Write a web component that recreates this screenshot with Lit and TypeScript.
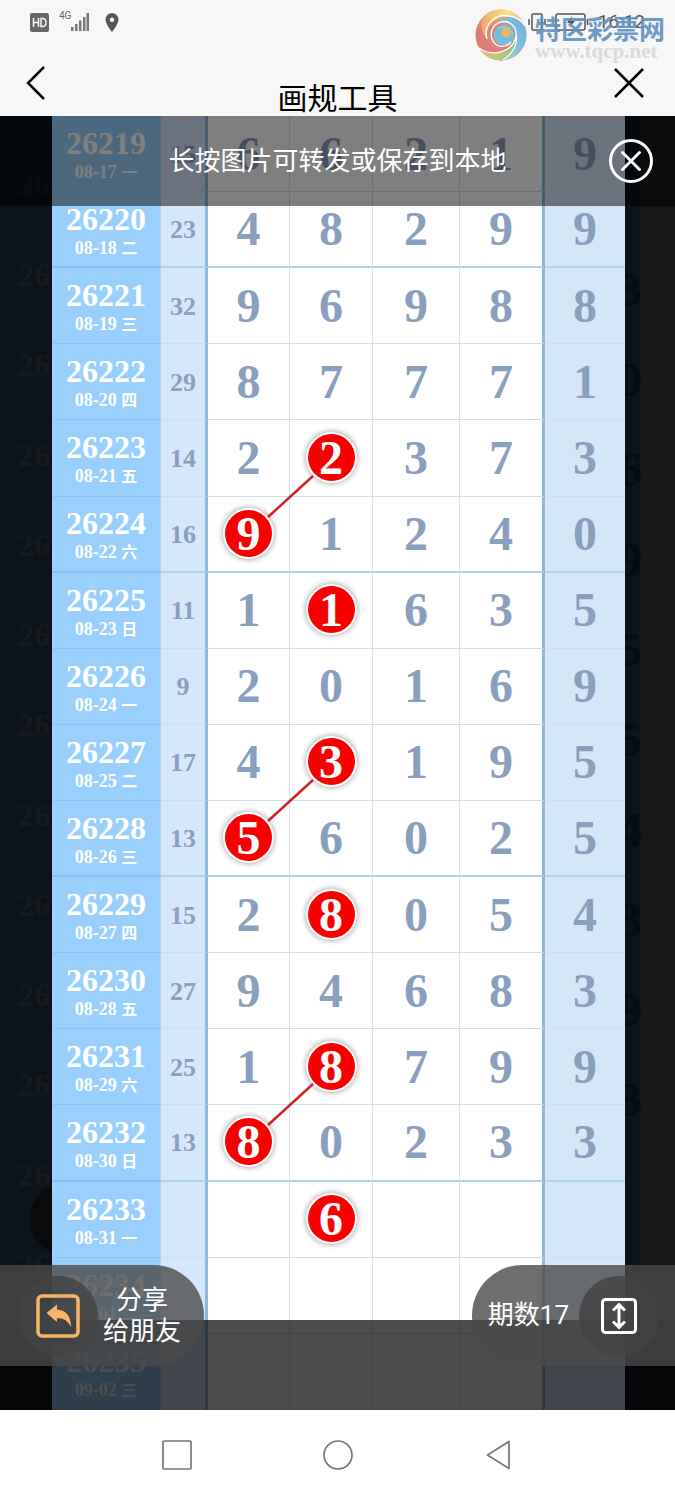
import { LitElement, html, css, svg, nothing } from "lit";
import { customElement, property } from "lit/decorators.js";
import { classMap } from "lit/directives/class-map.js";

interface Draw {
  issue: string;
  date: string;
  day: string;
  sum: string;
  nums: string[];
  ball?: number;
  linked?: boolean;
}

const draw = (issue: string, date: string, day: string, sum: string, nums: string, ball?: number, linked = false): Draw => ({
  issue, date, day, sum, nums: nums.padEnd(5, " ").split(""), ball, linked,
});

const DRAWS: Draw[] = [
  draw("26219", "08-17", "一", "15", "66219"),
  draw("26220", "08-18", "二", "23", "48299"),
  draw("26221", "08-19", "三", "32", "96988"),
  draw("26222", "08-20", "四", "29", "87771"),
  draw("26223", "08-21", "五", "14", "22373", 1),
  draw("26224", "08-22", "六", "16", "91240", 0, true),
  draw("26225", "08-23", "日", "11", "11635", 1),
  draw("26226", "08-24", "一", "9", "20169"),
  draw("26227", "08-25", "二", "17", "43195", 1),
  draw("26228", "08-26", "三", "13", "56025", 0, true),
  draw("26229", "08-27", "四", "15", "28054", 1),
  draw("26230", "08-28", "五", "27", "94683"),
  draw("26231", "08-29", "六", "25", "18799", 1),
  draw("26232", "08-30", "日", "13", "80233", 0, true),
  draw("26233", "08-31", "一", "", " 6", 1),
  draw("26234", "09-01", "二", "", ""),
  draw("26235", "09-02", "三", "", ""),
];

const BACK_LEFT = ["26", "26", "26", "26", "26", "26", "26", "26", "26", "26", "26", "26", "26"];
const BACK_RIGHT = ["", "3", "0", "6", "9", "5", "5", "4", "3", "9", "3", "", ""];

@customElement("status-bar")
class StatusBar extends LitElement {
  static styles = css`
    :host { display: flex; align-items: center; height: 44px; padding: 0 30px; color: #666; }
    svg { display: block; }
    .hd { margin-right: 10px; }
    .net { font-size: 10px; line-height: 12px; align-self: flex-start; margin-top: 10px; }
    .pin { margin-left: 16px; }
    .right { margin-left: auto; display: flex; align-items: center; gap: 9px; color: #555; }
    .time { font-size: 19px; line-height: 24px; }
  `;
  render() {
    return html`
      <svg class="hd" width="19" height="19" viewBox="0 0 19 19">
        <rect width="19" height="19" rx="2" fill="#666" />
        <path d="M3.500 5v9M8.500 5v9M3.500 9.500h5M11 5.500v8h1.500q3.500 0 3.500-4t-3.500-4z" fill="none" stroke="#f7f7f7" stroke-width="1.500" />
      </svg>
      <span class="net">4G</span>
      <svg width="18" height="18" viewBox="0 0 18 18" fill="#777">
        <rect x="0" y="14" width="2.500" height="4" /><rect x="4" y="11" width="2.500" height="7" />
        <rect x="8" y="7.500" width="2.500" height="10.500" /><rect x="12" y="4" width="2.500" height="14" />
        <rect x="15.500" y="0" width="2.500" height="18" />
      </svg>
      <svg class="pin" width="14" height="19" viewBox="0 0 14 19">
        <path d="M7 0a6.500 6.500 0 0 0-6.500 6.500C.5 11 7 19 7 19s6.500-8 6.500-12.500A6.500 6.500 0 0 0 7 0zm0 4.500a2.200 2.200 0 1 1 0 4.400 2.200 2.200 0 0 1 0-4.400z" fill="#555" />
      </svg>
      <span class="right">
        <svg width="18" height="18" viewBox="0 0 18 18" fill="none" stroke="#555" stroke-width="1.500">
          <rect x="4" y="1" width="10" height="16" rx="1" /><path d="M1 6v6M17 6v6" />
        </svg>
        <svg width="34" height="18" viewBox="0 0 34 18" fill="none" stroke="#555" stroke-width="1.500">
          <rect x="1" y="1" width="29" height="16" rx="2" /><path d="M32.500 6v6" /><path d="M17 3l-5 7h4l-2 5 6-7h-4z" fill="#555" stroke="none" />
        </svg>
        <span class="time">16:12</span>
      </span>
    `;
  }
}

@customElement("site-mark")
class SiteMark extends LitElement {
  static styles = css`
    :host { display: flex; align-items: center; gap: 8px; }
    .words { display: flex; flex-direction: column; padding-top: 4px; }
    .name { font: 700 26px/28px "Noto Sans CJK SC", sans-serif; color: #5f90bf; }
    .url { font: 700 21px/18px "Liberation Serif", serif; color: #d8d8d8; }
  `;
  render() {
    return html`
      <svg width="52" height="52" viewBox="0 0 52 52">
        <defs>
          <linearGradient id="red" x1="0" y1="0" x2="0" y2="1"><stop offset="0" stop-color="#eea36f" /><stop offset=".4" stop-color="#d8706a" /><stop offset="1" stop-color="#d9736b" /></linearGradient>
          <linearGradient id="sun" x1="0" y1="0" x2="1" y2="0"><stop offset="0" stop-color="#eda05f" /><stop offset=".6" stop-color="#f9e07d" /><stop offset="1" stop-color="#f0b368" /></linearGradient>
          <linearGradient id="sea" x1="0" y1="1" x2="1" y2="0"><stop offset="0" stop-color="#a5d8c0" /><stop offset=".5" stop-color="#6dc0e0" /><stop offset="1" stop-color="#6a9fd0" /></linearGradient>
          <linearGradient id="leaf" x1="0" y1="0" x2="1" y2="0"><stop offset="0" stop-color="#e0bd62" /><stop offset=".6" stop-color="#a8c66d" /><stop offset="1" stop-color="#78bd9a" /></linearGradient>
        </defs>
        <circle cx="26" cy="26" r="25.500" fill="url(#red)" />
        <path d="M10 6C22-4 44 0 50 17C42 7 28 5 19 12C13 17 11 24 12 30C5 22 5 12 10 6Z" fill="url(#sun)" />
        <path d="M50 17C55 34 44 50 28 51C41 43 45 31 40 22C37 16 31 12 23 13C32 4 46 8 50 17Z" fill="url(#sea)" />
        <path d="M4 39C16 50 36 46 41 27C43 40 36 50 28 51.500C18 52 8 47 4 39Z" fill="url(#leaf)" />
        <path d="M12 30C10 17 22 10 31 15C22 15 17 22 19 29C21 36 29 38 34 34C29 44 14 42 12 30Z" fill="#d77b6d" />
        <path d="M19 25C20 16 32 12 38 20C42 27 38 35 31 36C23 37 18 32 19 25Z" fill="#64b8df" />
        <path d="M22 20C28 14 38 18 38 27C35 20 28 18 22 20Z" fill="#a1ce88" />
        <circle cx="31" cy="24" r="4.500" fill="#f0ae58" />
        <path d="M12 30C8 16 20 4 34 7C42 8 47 12 50 17M4 39C18 49 38 43 41 27C42 17 34 11 26 13C17 15 14 25 18 32C22 39 31 39 36 33M28 51C39 44 43 34 41 25" fill="none" stroke="#fff" stroke-width="1.400" />
      </svg>
      <span class="words"><span class="name">特区彩票网</span><span class="url">www.tqcp.net</span></span>
    `;
  }
}

@customElement("trend-table")
class TrendTable extends LitElement {
  @property({ attribute: false }) rows: Draw[] = [];

  static styles = css`
    :host { display: grid; }
    .grid { width: 100%; height: 100%; table-layout: fixed; border-collapse: separate; border-spacing: 0; background: #fff; }
    .c-issue { width: 109px; }
    .c-sum { width: 47px; }
    .c-one { width: 82px; }
    .c-two { width: 83px; }
    .c-three { width: 87px; }
    .c-four { width: 85px; }
    .c-five { width: 80px; }
    th, td { box-sizing: border-box; height: 76px; padding: 0; text-align: center; vertical-align: middle;
      border-bottom: 1px solid #cddfea; border-right: 1px solid #d5e3ea; font-weight: 700; color: #8a9fbd; }
    .issue { background: #99d0fd; color: #fff; border-bottom-color: #8bc6f3; border-right-color: #a9d4f6; padding-top: 7px; }
    .code { display: block; font-size: 32px; line-height: 30px; }
    .date { display: block; font-size: 18px; line-height: 28px; }
    .day { font-family: "Noto Sans CJK SC", sans-serif; font-size: 16px; line-height: 20px; }
    .sum { background: #d4e7fb; font-size: 26px; border-right: 3px solid #8fb9dc; padding-top: 2px; }
    .num { font-size: 48px; line-height: 48px; }
    .fourth { border-right: 3px solid #8bb9d2; }
    .last { background: #d4e7f9; border-right: 0; }
    .thick th, .thick td { border-bottom: 2px solid #aed4ea; }
    .thick .issue { border-bottom-color: #86c1ef; }
    .ball { position: relative; display: inline-block; width: 47px; height: 47px; border-radius: 50%;
      background: #f80000; color: #fff; box-shadow: 0 0 0 2px #fff, 0 0 4px 4px #ccc5c5; vertical-align: top; }
    .link { position: absolute; left: 40px; top: -38px; z-index: 1; }
  `;

  private cell(row: Draw, value: string, i: number) {
    const cls = classMap({ num: true, fourth: i === 3, last: i === 4 });
    const link = row.linked
      ? html`<svg class="link" width="50" height="50" viewBox="0 0 50 50">${svg`<path d="M3 45L48 4" stroke="#d0222c" stroke-width="2.500" />`}</svg>`
      : nothing;
    return html`<td class=${cls}>${row.ball === i ? html`<span class="ball">${value}${link}</span>` : value.trim()}</td>`;
  }

  render() {
    return html`
      <table class="grid">
        <colgroup>
          <col class="c-issue" /><col class="c-sum" /><col class="c-one" /><col class="c-two" />
          <col class="c-three" /><col class="c-four" /><col class="c-five" />
        </colgroup>
        <tbody>
          ${this.rows.map((row, r) => html`
            <tr class=${classMap({ thick: r % 4 === 1 })}>
              <th class="issue" scope="row">
                <span class="code">${row.issue}</span>
                <span class="date">${row.date} <span class="day">${row.day}</span></span>
              </th>
              <td class="sum">${row.sum}</td>
              ${row.nums.map((n, i) => this.cell(row, n, i))}
            </tr>`)}
        </tbody>
      </table>
    `;
  }
}

@customElement("app-root")
class AppRoot extends LitElement {
  static styles = css`
    :host { display: flex; flex-direction: column; min-height: 100vh; background: #fff;
      font-family: "Liberation Serif", "Noto Sans CJK SC", serif; }
    button { display: flex; align-items: center; justify-content: center; margin: 0; padding: 0; border: 0; background: none; color: inherit; font: inherit; cursor: pointer; }
    svg { display: block; }
    .head { position: relative; background: #f7f7f7; font-family: Roboto, "Noto Sans CJK SC", sans-serif; }
    .mark { position: absolute; top: 9px; right: 10px; opacity: 0.9; }
    .bar { display: grid; grid-template-columns: 92px 1fr 92px; height: 72px; }
    .bar button { height: 78px; }
    .back { padding-right: 20px; }
    .title { margin: 0; padding-bottom: 5px; align-self: end; text-align: center; font-size: 30px; line-height: 36px; font-weight: 400; color: #000; }
    .main { position: relative; flex: 1; display: grid; grid-template-columns: 52px 1fr 50px; overflow: hidden; }
    .side { display: flex; flex-direction: column; overflow: hidden; font-weight: 700; }
    .side span { height: 90px; flex: none; }
    .left { position: relative; padding-top: 51px; background: #0b131a; color: #16191c; font-size: 32px; line-height: 36px; }
    .left span { padding-left: 18px; }
    .blob { position: absolute; left: 30px; bottom: 155px; width: 72px; height: 72px; border-radius: 50%; background: #080a0c; }
    .right { padding-top: 39px; background: linear-gradient(to right, #0b131b 15px, #171717 16px); color: #070c12; }
    .right span { margin-left: -7px; font-size: 48px; line-height: 90px; }
    .tip { position: absolute; inset: 0 0 auto; height: 90px; display: grid; grid-template-columns: 88px 1fr 88px; align-items: center;
      background: rgba(0, 0, 0, 0.5); color: #fff; text-align: center; font: 26px/36px Roboto, "Noto Sans CJK SC", sans-serif; }
    .tip p { grid-column: 2; margin: 0; }
    .shade { position: absolute; inset: auto 0 0; height: 90px; background: rgba(0, 0, 0, 0.7); }
    .pill { position: absolute; bottom: 44px; height: 101px; display: flex; align-items: center; background: rgba(74, 74, 74, 0.8); color: #fff;
      font: 26px/31px Roboto, "Noto Sans CJK SC", sans-serif; }
    .share { left: 0; padding: 0 23px 0 18px; gap: 5px; border-radius: 0 51px 51px 0; }
    .count { right: 0; padding: 0 16px; gap: 10px; border-radius: 51px 0 0 51px; }
    .disc { display: flex; align-items: center; justify-content: center; width: 80px; height: 80px; border-radius: 50%; background: rgba(66, 66, 66, 0.8); }
    .nav { display: flex; align-items: center; justify-content: center; gap: 131px; height: 90px; background: #fff; }
  `;

  render() {
    return html`
      <header class="head">
        <status-bar></status-bar>
        <div class="bar">
          <button class="back" aria-label="返回">
            <svg width="20" height="36" viewBox="0 0 20 36" fill="none" stroke="#000" stroke-width="2.500"><path d="M18 2L2 18l16 16" /></svg>
          </button>
          <h1 class="title">画规工具</h1>
          <button aria-label="关闭">
            <svg width="30" height="30" viewBox="0 0 30 30" fill="none" stroke="#000" stroke-width="2.500"><path d="M1 1l28 28M29 1L1 29" /></svg>
          </button>
        </div>
        <site-mark class="mark"></site-mark>
      </header>
      <main class="main">
        <div class="side left" aria-hidden="true">
          ${BACK_LEFT.map((t) => html`<span>${t}</span>`)}
          <i class="blob"></i>
        </div>
        <trend-table .rows=${DRAWS}></trend-table>
        <div class="side right" aria-hidden="true">${BACK_RIGHT.map((t) => html`<span>${t}</span>`)}</div>
        <div class="tip">
          <p>长按图片可转发或保存到本地</p>
          <button aria-label="关闭提示">
            <svg width="46" height="46" viewBox="0 0 46 46" fill="none" stroke="#fff" stroke-width="3">
              <circle cx="23" cy="23" r="20.500" /><path d="M14.500 14.500l17 17M31.500 14.500l-17 17" stroke-linecap="round" />
            </svg>
          </button>
        </div>
        <div class="shade"></div>
        <button class="pill share">
          <span class="disc">
            <svg width="44" height="44" viewBox="0 0 44 44">
              <rect x="2" y="2" width="40" height="40" rx="4" fill="none" stroke="#f8b469" stroke-width="3.500" />
              <path d="M10.500 19L21 10.500V15.500C29 16 35 21 35 33C32 27 28 24 21 24V28Z" fill="#f8b469" />
            </svg>
          </span>
          <span>分享<br />给朋友</span>
        </button>
        <button class="pill count">
          <span>期数17</span>
          <span class="disc">
            <svg width="36" height="36" viewBox="0 0 36 36" fill="none" stroke="#fff" stroke-width="3">
              <rect x="1.500" y="1.500" width="33" height="33" rx="3" />
              <path d="M18 7v22M12 12.500l6-6 6 6M12 23.500l6 6 6-6" />
            </svg>
          </span>
        </button>
      </main>
      <nav class="nav">
        <button aria-label="最近任务">
          <svg width="30" height="30" viewBox="0 0 30 30" fill="none" stroke="#777" stroke-width="1.700"><rect x="1" y="1" width="28" height="28" rx="1" /></svg>
        </button>
        <button aria-label="主屏幕">
          <svg width="30" height="30" viewBox="0 0 30 30" fill="none" stroke="#777" stroke-width="1.700"><circle cx="15" cy="15" r="14" /></svg>
        </button>
        <button aria-label="后退">
          <svg width="30" height="30" viewBox="0 0 30 30" fill="none" stroke="#777" stroke-width="1.700" stroke-linejoin="round"><path d="M25 1.500v27L3.500 15z" /></svg>
        </button>
      </nav>
    `;
  }
}
